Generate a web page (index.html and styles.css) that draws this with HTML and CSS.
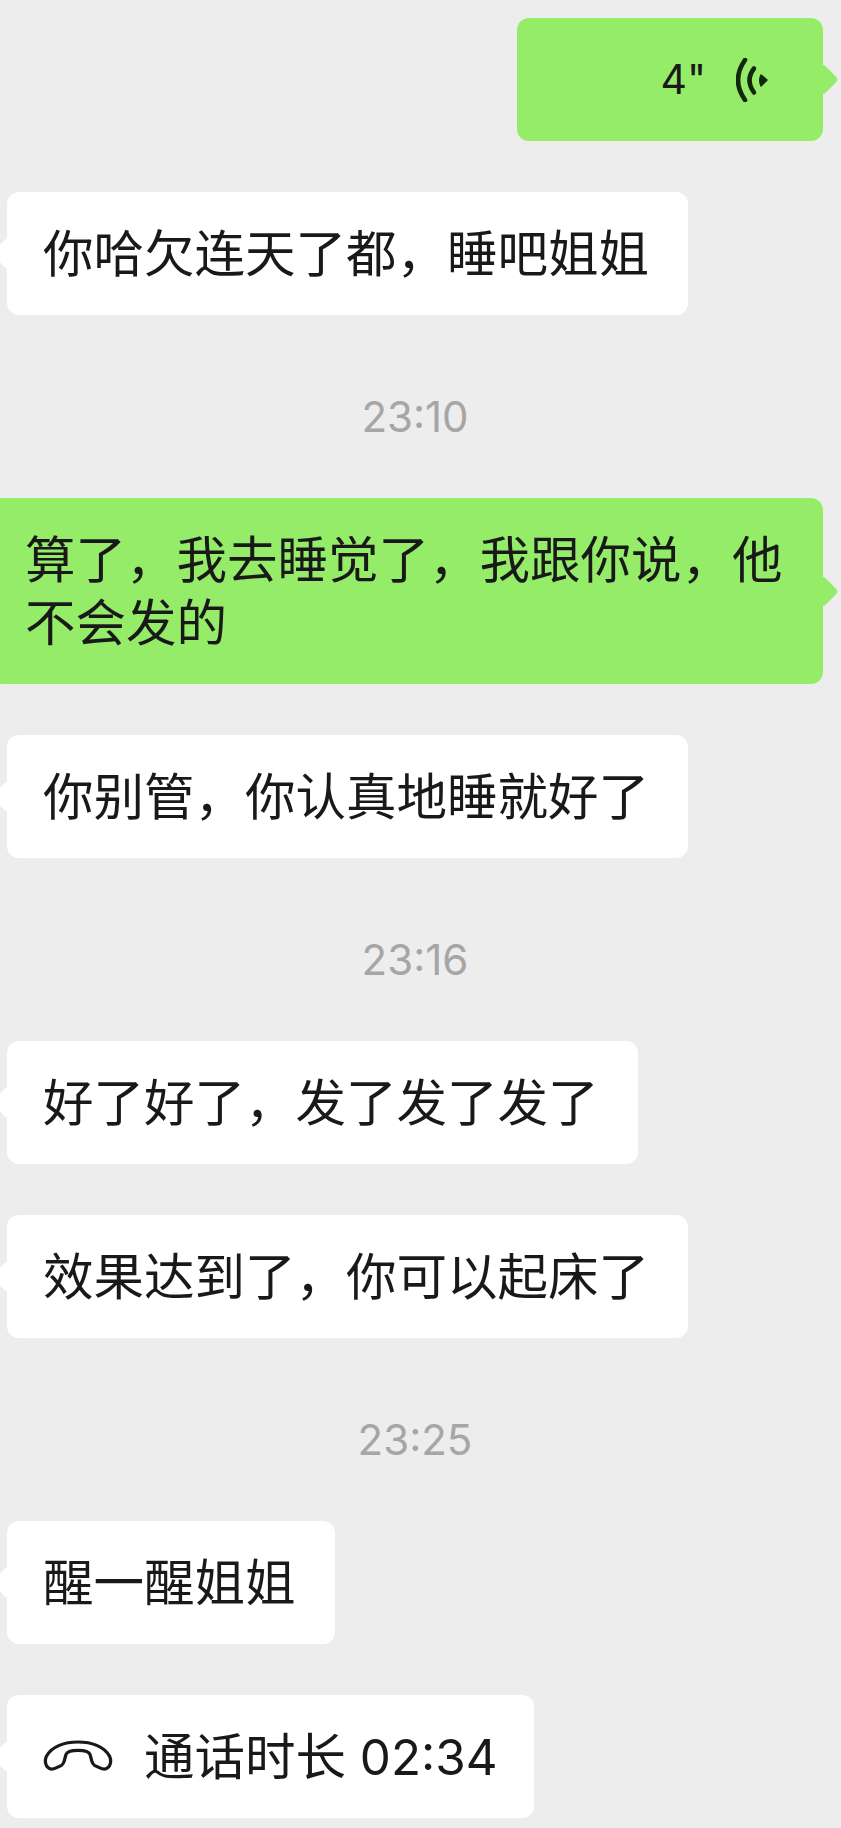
FILE: index.html
```html
<!DOCTYPE html>
<html lang="zh-CN">
<head>
    <meta charset="UTF-8" />
    <title>聊天记录</title>
    <link rel="stylesheet" href="styles.css">
</head>
<body>
    <div class="chat">
        <!-- voice message -->
        <div class="row row-me">
            <div class="bubble bubble-me bubble-voice">
                <span class="voice-len">4"</span>
                <svg class="voice-icon" viewBox="0 0 32 44" width="32" height="44">
                    <path d="M9 2 Q-5 22 9 42" />
                    <path d="M18 10.5 Q9 22 18 34.5" />
                    <path class="voice-dot" d="M25 17 L31 22 L25 28 Q22.5 22 25 17Z" />
                </svg>
            </div>
        </div>

        <div class="row">
            <div class="bubble">你哈欠连天了都，睡吧姐姐</div>
        </div>

        <div class="time">23:10</div>

        <div class="row row-me">
            <div class="bubble bubble-me bubble-long">算了，我去睡觉了，我跟你说，他不会发的</div>
        </div>

        <div class="row">
            <div class="bubble">你别管，你认真地睡就好了</div>
        </div>

        <div class="time">23:16</div>

        <div class="row">
            <div class="bubble">好了好了，发了发了发了</div>
        </div>

        <div class="row">
            <div class="bubble">效果达到了，你可以起床了</div>
        </div>

        <div class="time">23:25</div>

        <div class="row">
            <div class="bubble">醒一醒姐姐</div>
        </div>

        <!-- call record -->
        <div class="row">
            <div class="bubble bubble-call">
                <svg class="call-icon" viewBox="0 0 64 30" width="70" height="31" preserveAspectRatio="none">
                    <path d="M5 27 C2 25 1.5 20 3 16 C8 6 20 2 32 2 C44 2 56 6 61 16 C62.5 20 62 25 59 27 C57 29 54 28 52 27 L47 24.5 C45.5 23.5 45 22 44.5 20 L43 14 C42 11 38 10 32 10 C26 10 22 11 21 14 L19.5 20 C19 22 18.5 23.5 17 24.5 L12 27 C10 28 7 29 5 27 Z" />
                </svg>
                <span>通话时长<span class="call-len"> 02:34</span></span>
            </div>
        </div>
    </div>
</body>
</html>
```

FILE: styles.css
```css
:root {
    --bg: #ededed;
    --green: #95ec69;
    --text: #191919;
    --time: #a6a6a6;
}

html, body {
    margin: 0;
    overflow: hidden;
}

body {
    background: var(--bg);
    color: var(--text);
    font-family: Inter, "Noto Sans CJK SC", sans-serif;
}

.chat {
    display: flex;
    flex-direction: column;
    gap: 51px;
    padding: 18px 18px 10px 7px;
}

.row {
    display: flex;
}

.row-me {
    justify-content: flex-end;
}

/* ====== Bubbles ====== */
.bubble {
    position: relative;
    box-sizing: border-box;
    padding: 30px 39px 30px 36px;
    border-radius: 12px;
    background: #fff;
    font-size: 50.5px;
    line-height: 63px;
}

.bubble::before {
    content: "";
    position: absolute;
    top: 50%;
    left: -11px;
    width: 23px;
    height: 23px;
    margin-top: -11.5px;
    border-radius: 4px;
    background: inherit;
    transform: rotate(45deg);
}

.bubble-me {
    background: var(--green);
}

.bubble-me::before {
    left: auto;
    right: -11px;
}

.bubble-long {
    flex: none;
    width: 833px;
    margin-left: -17px;
    padding-left: 35px;
}

/* ====== Voice message ====== */
.bubble-voice {
    display: flex;
    align-items: center;
    justify-content: flex-end;
    gap: 30px;
    width: 306px;
    height: 123px;
    padding: 0 55px 0 0;
}

.voice-len {
    font-size: 41px;
}

.voice-icon path {
    fill: none;
    stroke: #14260b;
    stroke-width: 4.6;
    stroke-linecap: round;
}

.voice-icon .voice-dot {
    fill: #14260b;
    stroke-width: 1.5;
    stroke-linejoin: round;
}

/* ====== Call record ====== */
.bubble-call {
    display: flex;
    align-items: center;
    gap: 31px;
    padding-right: 36px;
}

.call-icon {
    flex: none;
    margin-top: -2px;
}

.call-icon path {
    fill: none;
    stroke: var(--text);
    stroke-width: 3;
    stroke-linejoin: round;
}

.call-len {
    font-size: 49.3px;
    line-height: 1;
}

/* ====== Timestamps ====== */
.time {
    margin-top: 21px;
    color: var(--time);
    font-size: 42px;
    line-height: 60px;
    text-align: center;
}
```
